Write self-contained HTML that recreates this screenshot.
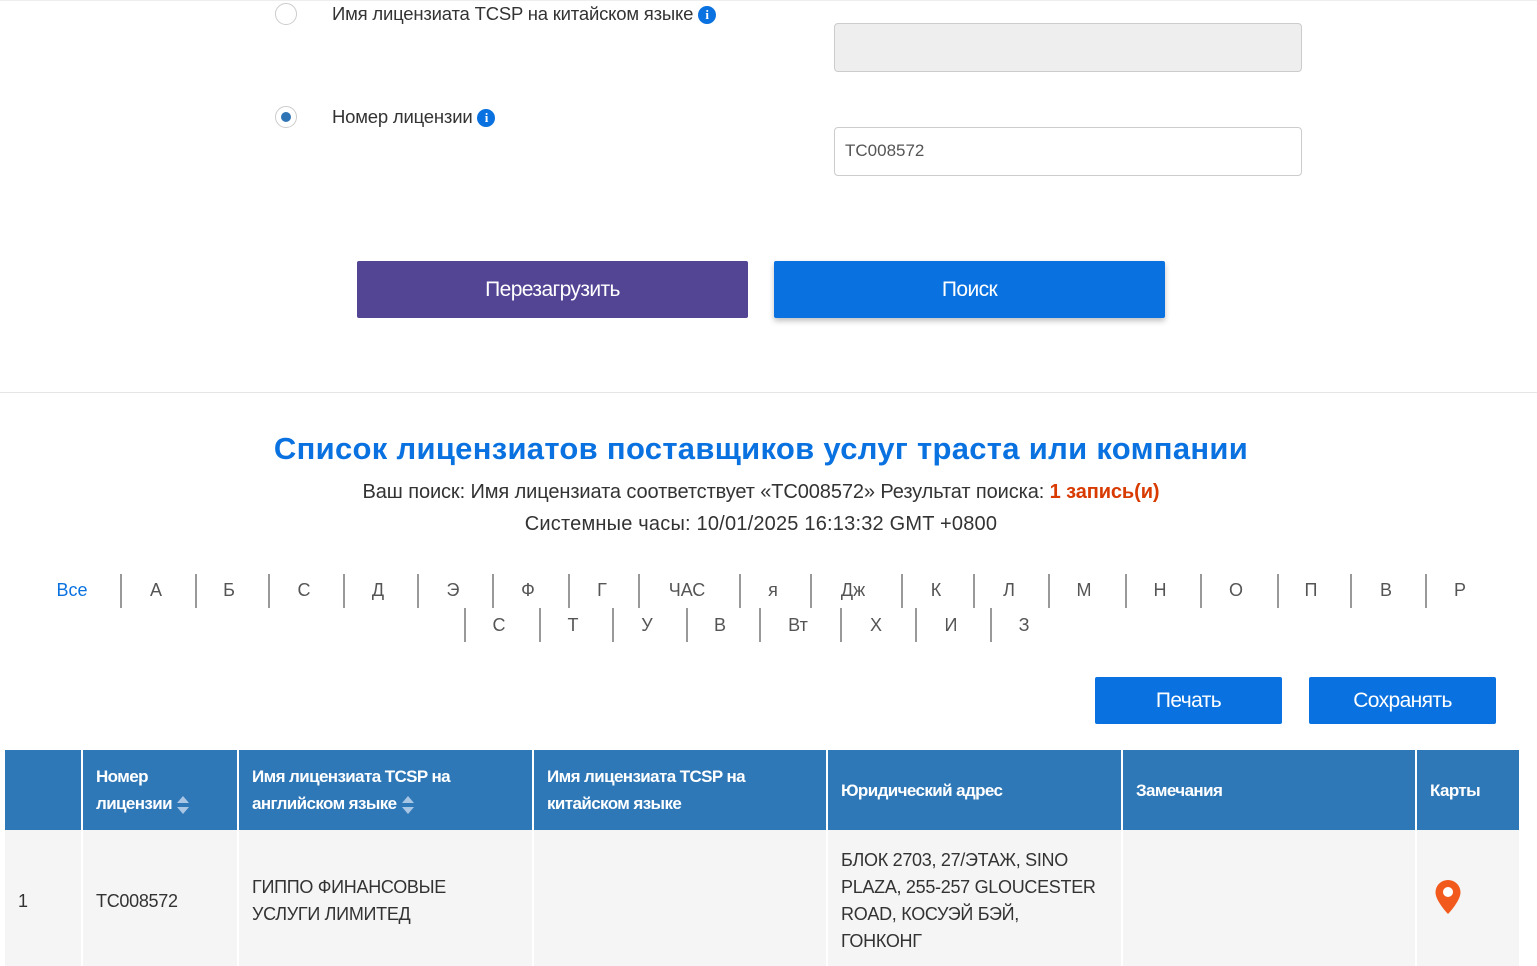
<!DOCTYPE html>
<html><head><meta charset="utf-8"><style>
body{margin:0;width:1537px;height:966px;overflow:hidden;background:#fff;font-family:"Liberation Sans",sans-serif;color:#333;position:relative}
.a{position:absolute}
.radio{width:22px;height:22px;border:1.5px solid #ccc;border-radius:50%;box-sizing:border-box;background:#fff}
.lbl{font-size:18.5px;letter-spacing:-0.2px;color:#333}
.info{display:inline-block;width:18px;height:18px;border-radius:50%;background:#0a72e0;color:#fff;font-size:13px;font-weight:bold;text-align:center;line-height:18px;font-family:"Liberation Serif",serif;vertical-align:1px}
.inp{border:1.5px solid #ccc;border-radius:4px;box-sizing:border-box;height:49px;width:468px}
.btn{color:#fff;font-size:21px;letter-spacing:-0.6px;text-align:center;border-radius:2px}
.alpha{font-size:18px;color:#555;transform:translateX(-50%)}
.sep{width:1.5px;height:34px;background:#999}
th,td{padding:0 0 0 13px;text-align:left;vertical-align:middle;border-right:2px solid #fff}
th{background:#2f78b7;color:#fff;font-weight:bold;font-size:17px;letter-spacing:-0.6px;line-height:27px;height:80px}
td{background:#f5f5f5;font-size:18px;letter-spacing:-0.3px;color:#333;line-height:27px}
.sort{display:inline-block;vertical-align:middle;width:14px;margin-left:4px}
</style></head><body>
<div class="a" style="left:0;right:0;top:0;height:1px;background:#eee"></div>
<div class="a radio" style="left:275px;top:3px"></div>
<div class="a lbl" style="left:332px;top:3px">Имя лицензиата TCSP на китайском языке <span class="info">i</span></div>
<div class="a inp" style="left:834px;top:23px;background:#eee"></div>
<div class="a radio" style="left:275px;top:106px"><div style="width:10px;height:10px;border-radius:50%;background:#2f74b5;margin:4.5px"></div></div>
<div class="a lbl" style="left:332px;top:106px">Номер лицензии <span class="info">i</span></div>
<div class="a inp" style="left:834px;top:127px;font-size:17px;color:#555;padding:13px 10px">TC008572</div>
<div class="a btn" style="left:357px;top:261px;width:391px;height:57px;line-height:57px;background:#534494">Перезагрузить</div>
<div class="a btn" style="left:774px;top:261px;width:391px;height:57px;line-height:57px;background:#0a72e0;box-shadow:0 3px 6px rgba(0,0,0,.25)">Поиск</div>
<div class="a" style="left:0;right:0;top:392px;height:1px;background:#e5e5e5"></div>
<div class="a" style="left:0;width:1522px;top:431px;text-align:center;font-size:31px;font-weight:bold;color:#0a72e0;letter-spacing:0.3px">Список лицензиатов поставщиков услуг траста или компании</div>
<div class="a" style="left:0;width:1522px;top:481px;text-align:center;font-size:20px;letter-spacing:-0.1px;color:#333">Ваш поиск: Имя лицензиата соответствует «TC008572» Результат поиска: <span style="color:#d83a00;font-weight:bold">1 запись(и)</span></div>
<div class="a" style="left:0;width:1522px;top:513px;text-align:center;font-size:20px;letter-spacing:0.2px;color:#333">Системные часы: 10/01/2025 16:13:32 GMT +0800</div>

<div class="a alpha" style="left:72px;top:580px;color:#0a72e0">Все</div>
<div class="a alpha" style="left:156px;top:580px">А</div>
<div class="a alpha" style="left:229px;top:580px">Б</div>
<div class="a alpha" style="left:304px;top:580px">С</div>
<div class="a alpha" style="left:378px;top:580px">Д</div>
<div class="a alpha" style="left:453px;top:580px">Э</div>
<div class="a alpha" style="left:528px;top:580px">Ф</div>
<div class="a alpha" style="left:602px;top:580px">Г</div>
<div class="a alpha" style="left:687px;top:580px">ЧАС</div>
<div class="a alpha" style="left:773px;top:580px">я</div>
<div class="a alpha" style="left:853px;top:580px">Дж</div>
<div class="a alpha" style="left:936px;top:580px">К</div>
<div class="a alpha" style="left:1009px;top:580px">Л</div>
<div class="a alpha" style="left:1084px;top:580px">М</div>
<div class="a alpha" style="left:1160px;top:580px">Н</div>
<div class="a alpha" style="left:1236px;top:580px">О</div>
<div class="a alpha" style="left:1311px;top:580px">П</div>
<div class="a alpha" style="left:1386px;top:580px">В</div>
<div class="a alpha" style="left:1460px;top:580px">Р</div>
<div class="a sep" style="left:120px;top:574px"></div><div class="a sep" style="left:195px;top:574px"></div><div class="a sep" style="left:268px;top:574px"></div><div class="a sep" style="left:343px;top:574px"></div><div class="a sep" style="left:417px;top:574px"></div><div class="a sep" style="left:492px;top:574px"></div><div class="a sep" style="left:568px;top:574px"></div><div class="a sep" style="left:638px;top:574px"></div><div class="a sep" style="left:739px;top:574px"></div><div class="a sep" style="left:810px;top:574px"></div><div class="a sep" style="left:901px;top:574px"></div><div class="a sep" style="left:973px;top:574px"></div><div class="a sep" style="left:1048px;top:574px"></div><div class="a sep" style="left:1125px;top:574px"></div><div class="a sep" style="left:1200px;top:574px"></div><div class="a sep" style="left:1277px;top:574px"></div><div class="a sep" style="left:1350px;top:574px"></div><div class="a sep" style="left:1425px;top:574px"></div>
<div class="a alpha" style="left:499px;top:615px">С</div>
<div class="a alpha" style="left:573px;top:615px">Т</div>
<div class="a alpha" style="left:647px;top:615px">У</div>
<div class="a alpha" style="left:720px;top:615px">В</div>
<div class="a alpha" style="left:798px;top:615px">Вт</div>
<div class="a alpha" style="left:876px;top:615px">Х</div>
<div class="a alpha" style="left:951px;top:615px">И</div>
<div class="a alpha" style="left:1024px;top:615px">З</div>
<div class="a sep" style="left:464px;top:608px"></div><div class="a sep" style="left:539px;top:608px"></div><div class="a sep" style="left:612px;top:608px"></div><div class="a sep" style="left:686px;top:608px"></div><div class="a sep" style="left:759px;top:608px"></div><div class="a sep" style="left:840px;top:608px"></div><div class="a sep" style="left:915px;top:608px"></div><div class="a sep" style="left:990px;top:608px"></div>

<div class="a btn" style="left:1095px;top:677px;width:187px;height:47px;line-height:47px;background:#0a72e0">Печать</div>
<div class="a btn" style="left:1309px;top:677px;width:187px;height:47px;line-height:47px;background:#0a72e0">Сохранять</div>

<table class="a" style="left:5px;top:750px;border-collapse:collapse;width:1515px;table-layout:fixed">
<colgroup><col style="width:77px"><col style="width:156px"><col style="width:295px"><col style="width:294px"><col style="width:295px"><col style="width:294px"><col style="width:104px"></colgroup>
<tr><th></th>
<th>Номер<br>лицензии<svg class="sort" width="14" height="22" viewBox="0 0 14 22"><path d="M1 9L7 2L13 9Z" fill="#a9c6e4"/><path d="M1 13L7 20L13 13Z" fill="#a9c6e4"/></svg></th>
<th>Имя лицензиата TCSP на<br>английском языке<svg class="sort" width="14" height="22" viewBox="0 0 14 22"><path d="M1 9L7 2L13 9Z" fill="#a9c6e4"/><path d="M1 13L7 20L13 13Z" fill="#a9c6e4"/></svg></th>
<th>Имя лицензиата TCSP на<br>китайском языке</th>
<th>Юридический адрес</th><th>Замечания</th><th>Карты</th></tr>
<tr style="height:136px"><td style="padding-top:6px">1</td><td style="padding-top:6px">TC008572</td><td style="padding-top:6px">ГИППО ФИНАНСОВЫЕ<br>УСЛУГИ ЛИМИТЕД</td><td></td>
<td style="padding-top:6px">БЛОК 2703, 27/ЭТАЖ, SINO<br>PLAZA, 255-257 GLOUCESTER<br>ROAD, КОСУЭЙ БЭЙ,<br>ГОНКОНГ</td><td></td>
<td style="padding-top:6px"><svg width="28" height="36" viewBox="0 0 28 36" style="margin-left:4px"><path d="M14 1C7 1 1.5 6.5 1.5 13.5C1.5 22 14 35 14 35S26.5 22 26.5 13.5C26.5 6.5 21 1 14 1Z" fill="#f25a1d"/><circle cx="14" cy="13" r="5" fill="#fff"/></svg></td></tr>
</table>
</body></html>
